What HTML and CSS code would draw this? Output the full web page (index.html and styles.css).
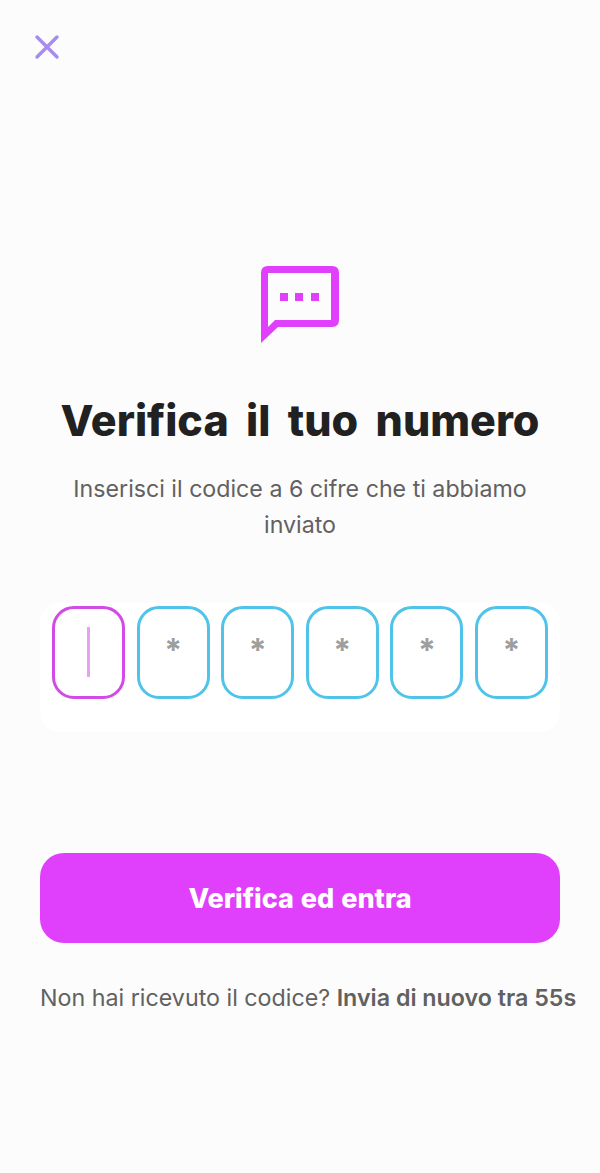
FILE: index.html
```html
<!DOCTYPE html>
<html>
	<head>
		<meta charset="utf-8">
		<meta name="viewport" content="width=device-width,initial-scale=1.0">
		<title>Verifica il tuo numero</title>
		<link rel="stylesheet" href="styles.css">
	</head>
	<body>
		<main class="page">
			<button class="close" aria-label="Chiudi">
				<svg width="26" height="26" viewBox="0 0 26 26" fill="none" stroke="#a78bf0" stroke-width="3.4" stroke-linecap="round">
					<path d="M3 3L23 23M23 3L3 23"/>
				</svg>
			</button>
			<div class="icon">
				<svg width="80" height="78" viewBox="0 0 80 78">
					<path fill="#e040fb" fill-rule="evenodd" d="M8 1H72Q79 1 79 8V55Q79 62 72 62H18L1 78V8Q1 1 8 1ZM8 8V62L15 55H71V8Z"/>
					<rect class="dot" x="20" y="28" width="8" height="8"/>
					<rect class="dot" x="35" y="28" width="8" height="8"/>
					<rect class="dot" x="51" y="28" width="8" height="8"/>
				</svg>
			</div>
			<h1 class="title">Verifica il tuo numero</h1>
			<p class="subtitle">Inserisci il codice a 6 cifre che ti abbiamo inviato</p>
			<div class="code">
				<div class="digit active"><span class="caret"></span></div>
				<div class="digit">*</div>
				<div class="digit">*</div>
				<div class="digit">*</div>
				<div class="digit">*</div>
				<div class="digit">*</div>
			</div>
			<button class="submit">Verifica ed entra</button>
			<p class="resend">Non hai ricevuto il codice? <b>Invia di nuovo tra 55s</b></p>
		</main>
	</body>
</html>
```

FILE: styles.css
```css
* {
	margin: 0;
	padding: 0;
	box-sizing: border-box;
}

body {
	background: #fcfcfc;
	font-family: Inter, "Liberation Sans", sans-serif;
}

.page {
	display: flex;
	flex-direction: column;
	align-items: center;
	height: 1173px;
	padding: 34px 40px 0;
}

.close {
	display: block;
	align-self: flex-start;
	margin-left: -6px;
	height: 26px;
	background: none;
	border: none;
}

.icon {
	margin-top: 205px;
	height: 78px;
}

.icon svg {
	display: block;
}

.dot {
	fill: #e040fb;
}

.title {
	margin-top: 50px;
	font-size: 43px;
	line-height: 54px;
	font-weight: 800;
	word-spacing: 8px;
	color: #212121;
	white-space: nowrap;
}

.subtitle {
	margin-top: 24px;
	width: 480px;
	font-size: 23.2px;
	line-height: 36px;
	text-align: center;
	color: #616161;
}

.code {
	display: flex;
	justify-content: space-between;
	width: 520px;
	margin-top: 60px;
	padding: 3px 12px 33px;
	background: #fff;
	border-radius: 20px;
}

.digit {
	display: flex;
	justify-content: center;
	width: 73px;
	height: 93px;
	padding-top: 22px;
	border: 3.5px solid #4fc3ea;
	border-radius: 22px;
	font-size: 32px;
	line-height: 40px;
	font-weight: 700;
	color: #9e9e9e;
}

.digit.active {
	border-color: #d24be6;
	padding-top: 18px;
}

.caret {
	width: 3px;
	height: 50px;
	background: #e8a0f2;
}

.submit {
	width: 520px;
	height: 90px;
	margin-top: 121px;
	background: #e040fb;
	border: none;
	border-radius: 24px;
	font-family: inherit;
	font-size: 27px;
	font-weight: 800;
	word-spacing: 1px;
	color: #fff;
}

.resend {
	margin-top: 39px;
	font-size: 23.25px;
	line-height: 32px;
	color: #616161;
	white-space: nowrap;
	align-self: flex-start;
}

.resend b {
	font-weight: 600;
}
```
